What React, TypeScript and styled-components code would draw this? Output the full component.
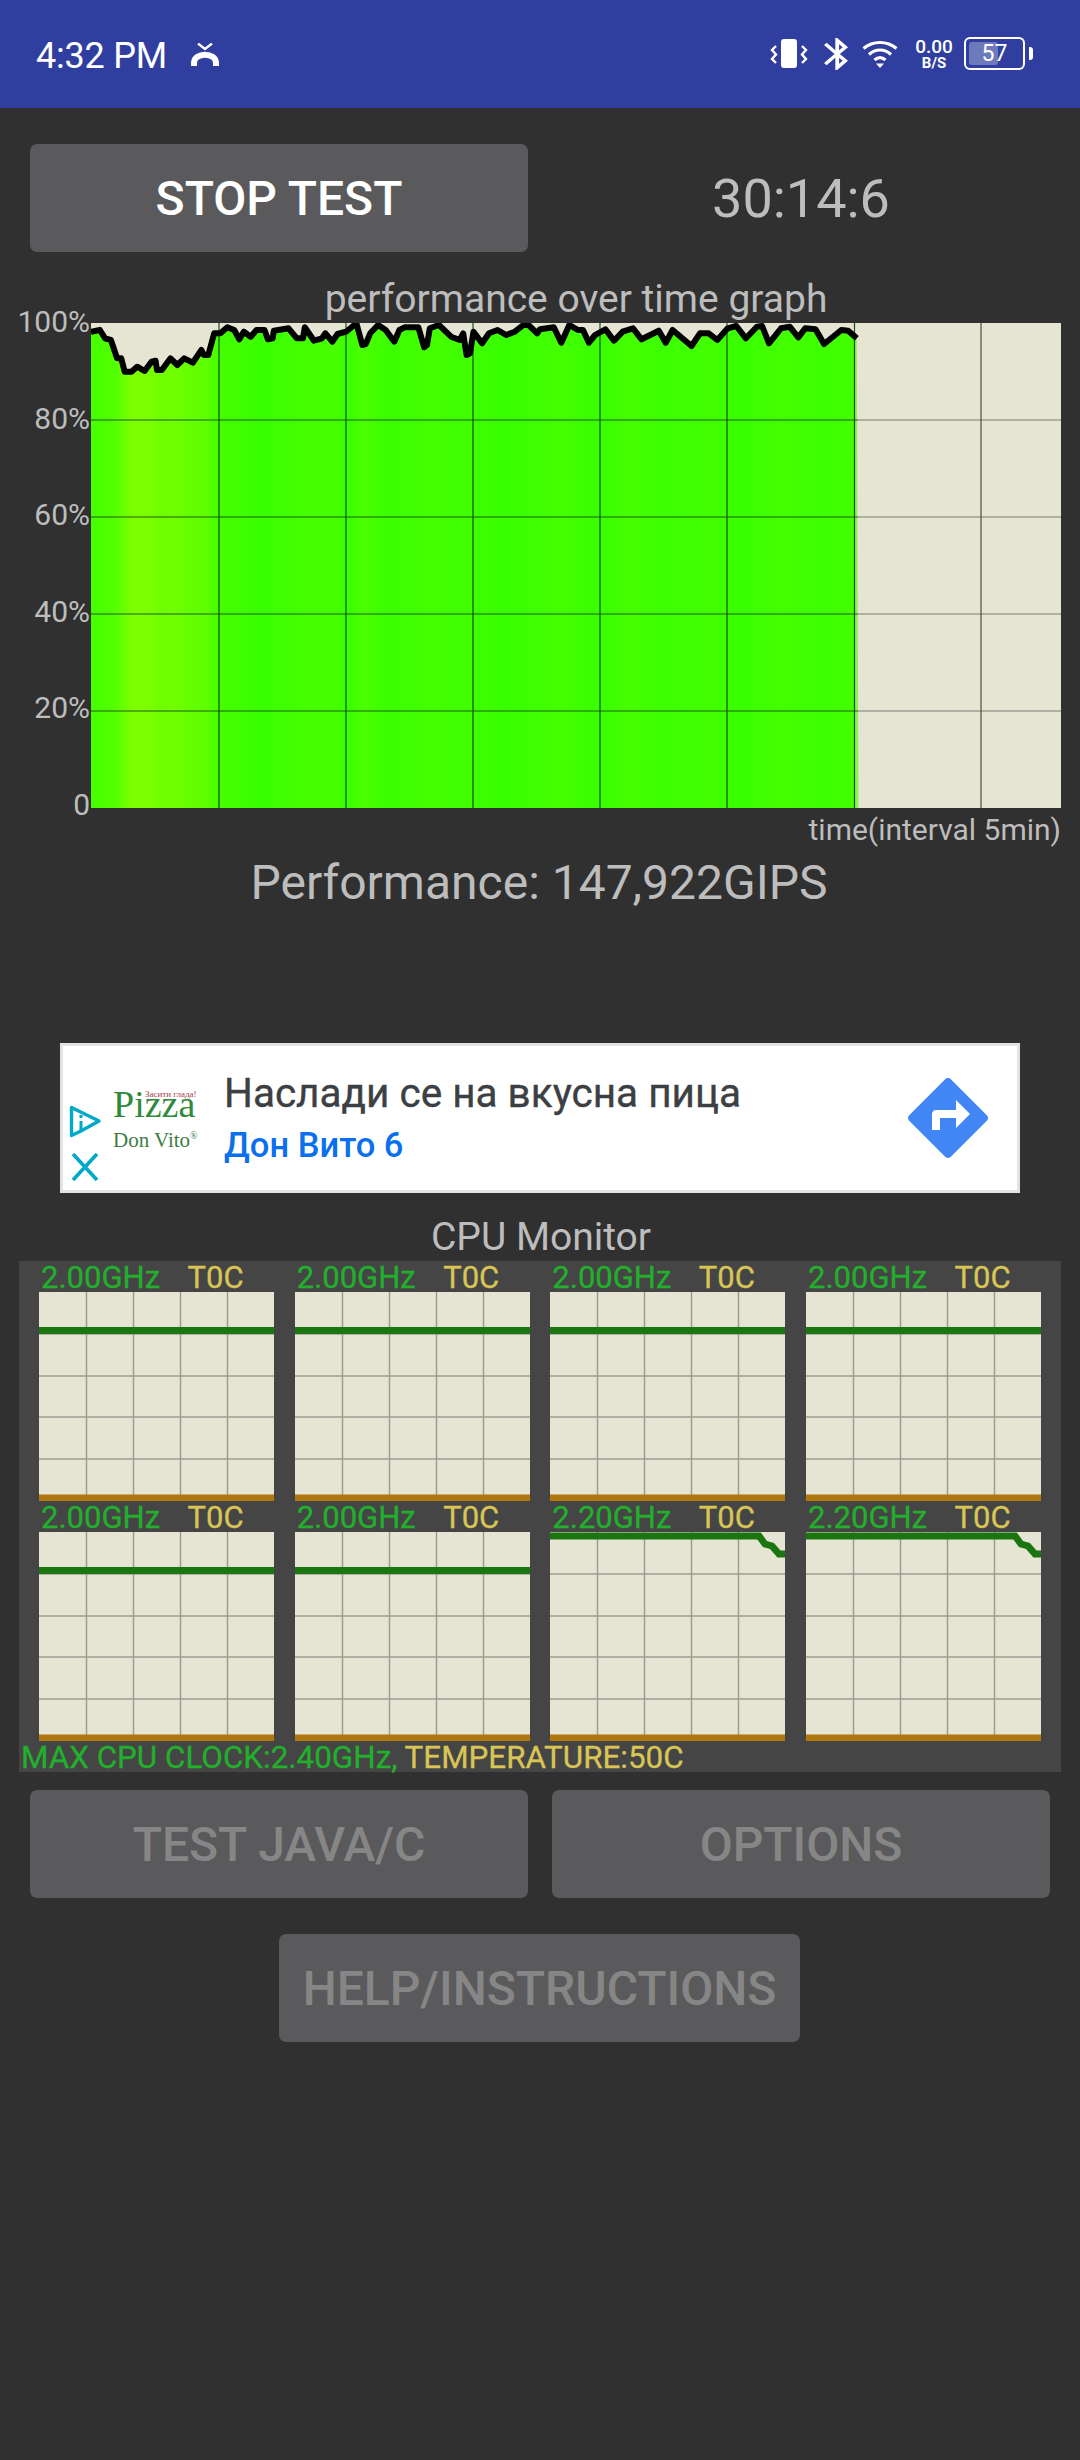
import styled, { createGlobalStyle } from "styled-components";

const GlobalStyle = createGlobalStyle`
  html, body {
    margin: 0;
    padding: 0;
    background: #303030;
  }
  body {
    font-family: Roboto, "Liberation Sans", sans-serif;
    color: #bdbdbd;
  }
`;

const Page = styled.div`
  width: 1080px;
  min-height: 2460px;
  background: #303030;
  display: flex;
  flex-direction: column;
`;

const StatusBar = styled.div`
  height: 108px;
  background: #303f9f;
  display: flex;
  align-items: flex-start;
  color: #fff;
`;

const Clock = styled.div`
  margin: 34px 0 0 36px;
  font-size: 36px;
  line-height: 44px;
  letter-spacing: -0.2px;
`;

const MissedCall = styled.svg`
  margin: 43px 0 0 23px;
`;

const StatusIcons = styled.div`
  margin: 37px 55px 0 auto;
  display: flex;
  align-items: flex-start;
`;

const StatusIcon = styled.svg<{ $left?: number; $top?: number }>`
  margin-left: ${(p) => p.$left ?? 0}px;
  margin-top: ${(p) => p.$top ?? 0}px;
`;

const Speed = styled.div`
  margin-left: 17px;
  width: 38px;
  display: flex;
  flex-direction: column;
  align-items: center;
  font-weight: 500;
  font-size: 19px;
  line-height: 19px;
  small {
    font-size: 15px;
    line-height: 15px;
    font-weight: 700;
  }
`;

const Battery = styled.div`
  margin-left: 11px;
  width: 61px;
  height: 33px;
  box-sizing: border-box;
  border: 2.5px solid #fff;
  border-radius: 6px;
  position: relative;
  display: flex;
  align-items: center;
  justify-content: center;
  font-size: 23px;
  line-height: 28px;
  &::after {
    content: "";
    position: absolute;
    right: -9.5px;
    top: 7.5px;
    width: 4px;
    height: 13px;
    background: #fff;
    border-radius: 0 3px 3px 0;
  }
`;

const BatteryLevel = styled.div`
  position: absolute;
  left: 3px;
  top: 3px;
  bottom: 3px;
  width: 29px;
  border-radius: 3px;
  background: rgba(255, 255, 255, 0.3);
`;

const BatteryValue = styled.span`
  position: relative;
`;

const ButtonRow = styled.div<{ $top: number }>`
  display: grid;
  grid-template-columns: 498px 498px;
  column-gap: 24px;
  padding-left: 30px;
  margin-top: ${(p) => p.$top}px;
  align-items: center;
`;

const Button = styled.div<{ $disabled?: boolean }>`
  height: 108px;
  border-radius: 7px;
  background: #5a5a5c;
  display: flex;
  align-items: center;
  justify-content: center;
  font-size: 48px;
  font-weight: 500;
  color: ${(p) => (p.$disabled ? "#868686" : "#ffffff")};
`;

const HelpButton = styled(Button)`
  width: 521px;
  margin: 36px 0 0 279px;
`;

const Timer = styled.div`
  text-align: center;
  font-size: 54px;
  color: #bdbdbd;
`;

const ChartTitle = styled.div`
  margin: 24px 0 0 91px;
  width: 970px;
  height: 47px;
  line-height: 47px;
  text-align: center;
  font-size: 39px;
`;

const ChartRow = styled.div`
  display: flex;
`;

const AxisLabels = styled.div`
  width: 90px;
  padding-right: 1px;
  margin: -15px 0 -11px;
  display: flex;
  flex-direction: column;
  justify-content: space-between;
  align-items: flex-end;
  font-size: 30px;
  line-height: 28px;
`;

const TimeLabel = styled.div`
  margin-right: 19px;
  text-align: right;
  font-size: 30px;
  line-height: 44px;
`;

const PerformanceValue = styled.div`
  text-align: center;
  font-size: 48px;
  line-height: 62px;
  padding-right: 2px;
`;

const Ad = styled.div`
  margin: 129px 0 0 60px;
  width: 960px;
  height: 150px;
  box-sizing: border-box;
  border: 3px solid #e2e2e2;
  background: #fff;
  display: flex;
  position: relative;
`;

const AdMarks = styled.div`
  width: 34px;
  margin: 0 0 9px 5px;
  align-self: flex-end;
  display: flex;
  flex-direction: column;
  align-items: center;
  gap: 13px;
`;

const Logo = styled.div`
  width: 100px;
  margin: 39px 0 0 11px;
  position: relative;
  font-family: "Liberation Serif", serif;
`;

const LogoName = styled.div`
  font-size: 38px;
  line-height: 38px;
  color: #2f8a3e;
`;

const LogoOwner = styled.div`
  margin-top: 5px;
  font-size: 21px;
  line-height: 24px;
  color: #3d7d45;
  white-space: nowrap;
  sup {
    font-size: 10px;
    line-height: 0;
  }
`;

const LogoSlogan = styled.div`
  position: absolute;
  left: 32px;
  top: 3px;
  font-size: 9px;
  line-height: 12px;
  color: #a83c48;
  white-space: nowrap;
`;

const AdText = styled.div`
  margin: 22px 0 0 11px;
  display: flex;
  flex-direction: column;
`;

const AdTitle = styled.div`
  font-size: 40.5px;
  line-height: 50px;
  font-weight: 400;
  -webkit-text-stroke: 0.35px #3c4043;
  color: #3c4043;
  white-space: nowrap;
`;

const AdLink = styled.div`
  margin-top: 5px;
  font-size: 34.5px;
  line-height: 44px;
  font-weight: 500;
  color: #0a70ee;
`;

const AdAction = styled.svg`
  position: absolute;
  left: 845px;
  top: 32px;
`;

const MonitorTitle = styled.div`
  padding: 20px 0 0 2px;
  text-align: center;
  font-size: 39px;
  line-height: 48px;
`;

const Monitor = styled.div`
  margin-left: 19px;
  width: 1042px;
  height: 511px;
  background: #454545;
  display: flex;
  flex-direction: column;
`;

const CoreGrid = styled.div`
  padding-left: 20px;
  display: grid;
  grid-template-columns: repeat(4, 235px);
  column-gap: 20.67px;
`;

const CoreLabels = styled.div`
  height: 29px;
  padding: 2px 0 0 2px;
  line-height: 29px;
  font-size: 31px;
  -webkit-text-stroke: 0.3px currentColor;
  display: flex;
`;

const Frequency = styled.span`
  width: 146.5px;
  color: #22b02c;
`;

const Temperature = styled.span`
  color: #d9c555;
`;

const CoreGraph = styled.svg`
  display: block;
`;

const MonitorFooter = styled.div`
  padding: 2px 0 0 2px;
  line-height: 29px;
  font-size: 31.4px;
  -webkit-text-stroke: 0.3px currentColor;
  white-space: nowrap;
  color: #22b02c;
  span {
    color: #d9c555;
  }
`;

const tracePartA: [number, number][] = [
  [264, 185], [290, 180], [305, 205], [322, 210], [340, 265], [352, 265], [362, 305], [382, 305],
  [398, 290], [420, 303], [440, 275], [452, 272], [456, 300], [470, 300], [495, 265], [515, 285],
  [535, 265], [560, 278], [585, 240], [592, 255], [605, 255], [622, 190], [640, 190], [660, 172],
  [680, 180], [695, 208], [708, 185], [728, 200], [745, 180], [768, 180], [778, 208], [792, 205],
  [795, 182], [838, 175], [862, 205], [880, 205], [885, 172], [912, 212], [935, 205], [945, 190],
  [965, 215], [980, 192], [1005, 185], [1035, 160], [1052, 225], [1062, 222], [1075, 190], [1098, 165],
  [1120, 180], [1145, 215], [1160, 180], [1175, 172], [1215, 172], [1232, 232], [1240, 225], [1248, 175],
  [1275, 165], [1310, 200], [1335, 210], [1345, 190], [1355, 255], [1365, 250], [1375, 185], [1400, 220],
  [1420, 190], [1445, 180], [1470, 195], [1495, 185], [1520, 165], [1535, 165], [1560, 190],
];

const tracePartB: [number, number][] = [
  [0, 178], [40, 172], [62, 218], [85, 165], [110, 180], [125, 180], [142, 218], [160, 195],
  [190, 178], [215, 212], [240, 185], [270, 175], [295, 208], [345, 182], [365, 218], [385, 180],
  [440, 228], [465, 190], [490, 190], [515, 210], [545, 175], [570, 168], [598, 205], [630, 170],
  [645, 168], [665, 220], [700, 175], [725, 170], [750, 202], [770, 175], [800, 178], [825, 222],
  [875, 180], [895, 182], [920, 205],
];

const trace = [
  ...tracePartA.map(([x, y]) => [x / 2.904 - 91, y / 3 - 53]),
  ...tracePartB.map(([x, y]) => [449 + x / 2.904, y / 3 - 53]),
]
  .map(([x, y]) => `${x.toFixed(1)},${y.toFixed(1)}`)
  .join(" ");

const bands: [number, string][] = [
  [0, "#46ff00"], [22, "#50ff00"], [32, "#66ff00"], [42, "#7eff00"], [60, "#7aff00"], [72, "#6cff00"],
  [84, "#72ff00"], [100, "#64ff00"], [116, "#5eff00"], [127, "#44ff00"], [150, "#40ff00"], [170, "#38ff00"],
  [200, "#42ff00"], [240, "#48ff00"], [258, "#38ff00"], [270, "#4aff00"], [300, "#3aff00"], [340, "#44ff00"],
  [384, "#3eff00"], [420, "#38ff00"], [470, "#44ff00"], [510, "#38ff00"], [540, "#46ff00"], [570, "#3cff00"],
  [620, "#42ff00"], [650, "#38ff00"], [690, "#44ff00"], [730, "#3cff00"], [764, "#44ff00"], [764.5, "#8cf25a"],
  [767.5, "#8cf25a"],
];

const verticals = [128, 255, 382, 509, 636, 763.5, 890];
const horizontals = [97, 194, 291, 388];
const GREEN_END = 767.5;

const PerformanceGraph = () => (
  <svg width="970" height="485" viewBox="0 0 970 485">
    <defs>
      <linearGradient id="bands" gradientUnits="userSpaceOnUse" x1="0" y1="0" x2={GREEN_END} y2="0">
        {bands.map(([x, c]) => (
          <stop key={x} offset={x / GREEN_END} stopColor={c} />
        ))}
      </linearGradient>
    </defs>
    <rect width="970" height="485" fill="#e6e5d3" />
    <polygon points={`${trace} ${GREEN_END},485 0,485`} fill="url(#bands)" />
    {horizontals.map((y) => (
      <g key={y}>
        <line x1="0" x2={GREEN_END} y1={y} y2={y} stroke="#1e5c14" strokeWidth="1.2" />
        <line x1={GREEN_END} x2="970" y1={y} y2={y} stroke="#9c9c94" strokeWidth="1.5" />
      </g>
    ))}
    {verticals.map((x) => (
      <line key={x} x1={x} x2={x} y1="0" y2="485" stroke={x > GREEN_END ? "#4a4a44" : "#1a4f14"} strokeWidth="1.2" />
    ))}
    <polyline points={trace} fill="none" stroke="#000" strokeWidth="6" strokeLinejoin="round" />
  </svg>
);

const CoreChart = ({ line }: { line: string }) => (
  <CoreGraph width="235" height="209" viewBox="0 0 235 209">
    <rect width="235" height="209" fill="#e6e5d3" />
    {[47.5, 94.5, 141.5, 188.5].map((x) => (
      <line key={x} x1={x} x2={x} y1="0" y2="209" stroke="#9c9c94" strokeWidth="1.5" />
    ))}
    {[42, 84, 125, 167].map((y) => (
      <line key={y} x1="0" x2="235" y1={y} y2={y} stroke="#9c9c94" strokeWidth="1.5" />
    ))}
    <rect y="202.5" width="235" height="6.5" fill="#b0770f" />
    <polyline points={line} fill="none" stroke="#1b7510" strokeWidth="7" />
  </CoreGraph>
);

const FLAT = "0,38.5 235,38.5";
const BOOST = "0,4 209,4 215,12 222,14 229,22 235,22";

const cores = [
  { freq: "2.00GHz", line: FLAT },
  { freq: "2.00GHz", line: FLAT },
  { freq: "2.00GHz", line: FLAT },
  { freq: "2.00GHz", line: FLAT },
  { freq: "2.00GHz", line: FLAT },
  { freq: "2.00GHz", line: FLAT },
  { freq: "2.20GHz", line: BOOST },
  { freq: "2.20GHz", line: BOOST },
];

const App = () => {
  return (
    <Page>
      <GlobalStyle />
      <StatusBar>
        <Clock>4:32 PM</Clock>
        <MissedCall width="30" height="23" viewBox="0 0 30 23" fill="none" stroke="#fff">
          <path d="M8 0.5l7 5.5 7-5.5" strokeWidth="2.4" />
          <path d="M4 23v-3C4 9 26 9 26 20v3" strokeWidth="6" />
        </MissedCall>
        <StatusIcons>
          <StatusIcon width="38" height="32" viewBox="0 0 38 32" fill="#fff">
            <rect x="11" y="2" width="16" height="29" rx="3" />
            <path d="M6 9L2 13l4 4.5L2 22l4 4" fill="none" stroke="#fff" strokeWidth="2.4" />
            <path d="M32 9l4 4-4 4.5 4 4.5-4 4" fill="none" stroke="#fff" strokeWidth="2.4" />
          </StatusIcon>
          <StatusIcon $left={16} $top={1} width="24" height="32" viewBox="5 2 12.71 20" preserveAspectRatio="none" fill="#fff">
            <path d="M17.71 7.71L12 2h-1v7.59L6.41 5 5 6.41 10.59 12 5 17.59 6.41 19 11 14.41V22h1l5.71-5.71-4.3-4.29 4.3-4.29zM13 5.83l1.88 1.88L13 9.59V5.83zm1.88 10.46L13 18.17v-3.76l1.88 1.88z" />
          </StatusIcon>
          <StatusIcon $left={14} $top={3} width="36" height="29" viewBox="0 0 36 29" fill="none" stroke="#fff" strokeWidth="3.2">
            <path d="M1.5 8.5C11 0.5 25 0.5 34.5 8.5" />
            <path d="M7 14.5C13.5 8.5 22.5 8.5 29 14.5" />
            <path d="M12.5 20C16 17 20 17 23.5 20" />
            <path d="M14 23.5h8l-4 4.5z" fill="#fff" stroke="none" />
          </StatusIcon>
          <Speed>
            0.00
            <small>B/S</small>
          </Speed>
          <Battery>
            <BatteryLevel />
            <BatteryValue>57</BatteryValue>
          </Battery>
        </StatusIcons>
      </StatusBar>

      <ButtonRow $top={36}>
        <Button>STOP TEST</Button>
        <Timer>30:14:6</Timer>
      </ButtonRow>

      <ChartTitle>performance over time graph</ChartTitle>
      <ChartRow>
        <AxisLabels>
          <span>100%</span>
          <span>80%</span>
          <span>60%</span>
          <span>40%</span>
          <span>20%</span>
          <span>0</span>
        </AxisLabels>
        <PerformanceGraph />
      </ChartRow>
      <TimeLabel>time(interval 5min)</TimeLabel>
      <PerformanceValue>Performance: 147,922GIPS</PerformanceValue>

      <Ad>
        <AdMarks>
          <svg width="34" height="36" viewBox="0 0 34 36" fill="none" stroke="#00a9c8" strokeWidth="3.4" strokeLinejoin="round">
            <path d="M3.5 3.5L31 17 13 27 3.5 31.5z" />
            <path d="M13 27V17" strokeWidth="3" />
            <path d="M13 14v-3" strokeWidth="3" />
          </svg>
          <svg width="28" height="28" viewBox="0 0 28 28" fill="none" stroke="#00a9c8" strokeWidth="3.6">
            <path d="M2 1l24 26M26 1L2 27" />
          </svg>
        </AdMarks>
        <Logo>
          <LogoSlogan>Засити глада!</LogoSlogan>
          <LogoName>Pizza</LogoName>
          <LogoOwner>
            Don Vito<sup>®</sup>
          </LogoOwner>
        </Logo>
        <AdText>
          <AdTitle>Наслади се на вкусна пица</AdTitle>
          <AdLink>Дон Вито 6</AdLink>
        </AdText>
        <AdAction width="80" height="80" viewBox="2 2 20 20" fill="#4285f4">
          <path d="M21.71 11.29l-9-9c-.39-.39-1.02-.39-1.41 0l-9 9c-.39.39-.39 1.02 0 1.41l9 9c.39.39 1.02.39 1.41 0l9-9c.39-.38.39-1.01 0-1.41zM14 14.5V12h-4v3H8v-4c0-.55.45-1 1-1h5V7.5l3.5 3.5-3.5 3.5z" />
        </AdAction>
      </Ad>

      <MonitorTitle>CPU Monitor</MonitorTitle>
      <Monitor>
        <CoreGrid>
          {cores.map((core, i) => (
            <div key={i}>
              <CoreLabels>
                <Frequency>{core.freq}</Frequency>
                <Temperature>T0C</Temperature>
              </CoreLabels>
              <CoreChart line={core.line} />
            </div>
          ))}
        </CoreGrid>
        <MonitorFooter>
          MAX CPU CLOCK:2.40GHz, <span>TEMPERATURE:50C</span>
        </MonitorFooter>
      </Monitor>

      <ButtonRow $top={18}>
        <Button $disabled>TEST JAVA/C</Button>
        <Button $disabled>OPTIONS</Button>
      </ButtonRow>
      <HelpButton $disabled>HELP/INSTRUCTIONS</HelpButton>
    </Page>
  );
};

export default App;
